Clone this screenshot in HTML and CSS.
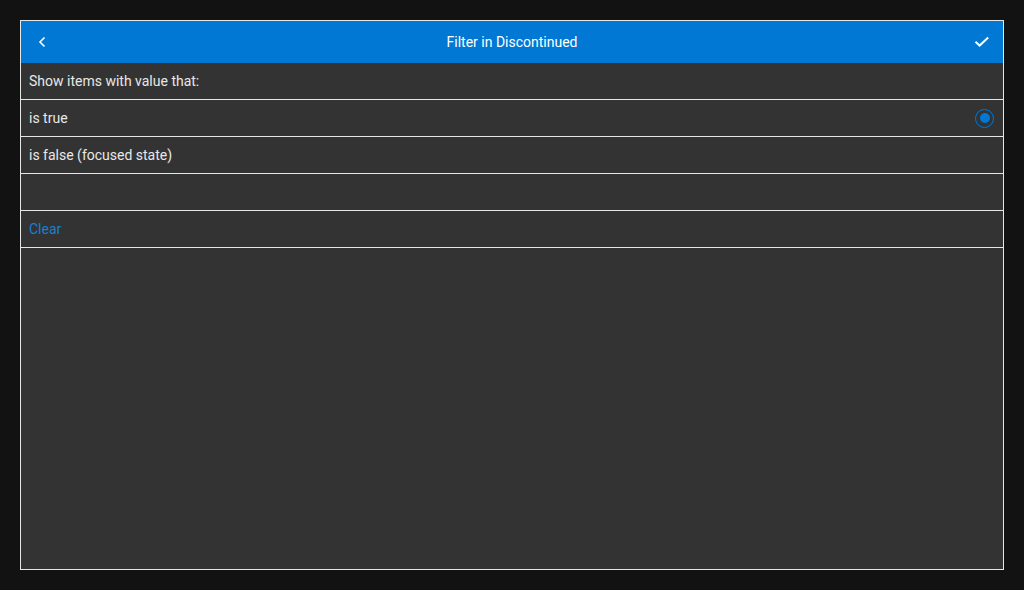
FILE: index.html
```html
<!DOCTYPE html>
<html>
<head>
<meta charset="utf-8">
<link rel="stylesheet" href="styles.css">
</head>
<body>
<div class="dialog">
  <div class="header">
    <span class="hbtn back">
      <svg width="16" height="16" viewBox="0 0 16 16"><path d="M10.5 3.5 L6 8 L10.5 12.5" fill="none" stroke="#fff" stroke-width="1.6"/></svg>
    </span>
    <span class="title">Filter in Discontinued</span>
    <span class="hbtn ok">
      <svg width="16" height="12" viewBox="0 0 16 12"><path d="M1.5 5.8 L5.6 9.6 L14.2 1.5" fill="none" stroke="#fff" stroke-width="2"/></svg>
    </span>
  </div>
  <div class="row">Show items with value that:</div>
  <div class="row option">
    <span>is true</span>
    <span class="radio"><span class="dot"></span></span>
  </div>
  <div class="row option">is false (focused state)</div>
  <div class="row"></div>
  <div class="row clear">Clear</div>
  <div class="rest"></div>
</div>
</body>
</html>
```
FILE: styles.css
```css
html, body {
  margin: 0;
  padding: 0;
  background: #121212;
}
body {
  padding: 20px;
  font-family: Roboto, "Liberation Sans", sans-serif;
  font-size: 14px;
  color: #e8e8e8;
}
.dialog {
  width: 982px;
  height: 548px;
  border: 1px solid #e6e6e6;
  background: #333333;
  display: flex;
  flex-direction: column;
}
.header {
  height: 42px;
  background: #0078d4;
  display: flex;
  align-items: center;
  color: #ffffff;
  flex-shrink: 0;
}
.hbtn {
  width: 42px;
  height: 42px;
  display: flex;
  align-items: center;
  justify-content: center;
}
.title {
  flex: 1;
  text-align: center;
}
.row {
  height: 36px;
  border-bottom: 1px solid #e6e6e6;
  display: flex;
  align-items: center;
  padding: 0 8px;
  flex-shrink: 0;
}
.option {
  justify-content: space-between;
}
.radio {
  width: 17px;
  height: 17px;
  border: 1.5px solid #0078d4;
  border-radius: 50%;
  display: flex;
  align-items: center;
  justify-content: center;
  margin-right: 1px;
}
.dot {
  width: 10px;
  height: 10px;
  border-radius: 50%;
  background: #0078d4;
}
.clear {
  color: #1a7fd0;
}
.rest {
  flex: 1;
}
```
